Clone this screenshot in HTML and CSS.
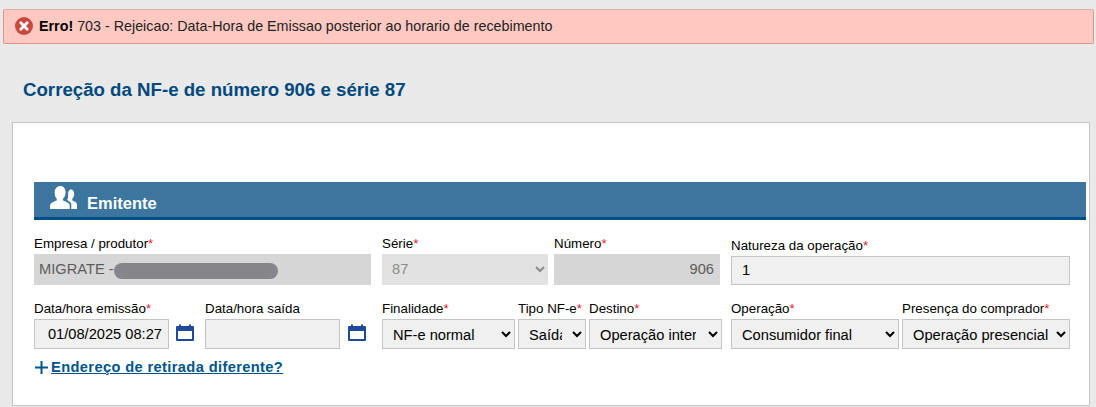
FILE: index.html
```html
<!doctype html>
<html lang="pt-BR">
<head>
	<meta charset="UTF-8">
	<title>Correção da NF-e</title>
	<link rel="stylesheet" href="styles.css">
</head>
<body>
	<div class="alerta">
		<svg class="alerta-icone" width="18" height="18" viewBox="0 0 18 18">
			<circle cx="9" cy="9" r="9" fill="#c9483f"/>
			<path d="M5.8 5.8l6.4 6.4M12.2 5.8l-6.4 6.4" stroke="#fff" stroke-width="2.8" stroke-linecap="round"/>
		</svg>
		<span><b>Erro!</b> 703 - Rejeicao: Data-Hora de Emissao posterior ao horario de recebimento</span>
	</div>

	<h1 class="titulo">Correção da NF-e de número 906 e série 87</h1>

	<div class="cartao">
		<div class="secao">
			<svg class="secao-icone" width="27" height="23" viewBox="1 1 26 21" preserveAspectRatio="none">
				<path fill="#fff" d="M11 1c3 0 5 2.400 5 5.600 0 2.400-1 4.600-2.500 6v1.600c2 .8 6 2 6.500 4.400v3.400H1v-3.400c.4-2.400 4.500-3.600 6.500-4.400v-1.600C6 11.200 5.500 9 5.500 6.600 5.500 3.400 8 1 11 1z"/>
				<path fill="#fff" d="M20.500 4c2.300 0 3.800 1.900 3.800 4.300 0 1.900-.8 3.500-1.900 4.600v1.400c1.600.6 4.200 1.500 4.600 3.400v4.300h-5.500v-4.800c-.4-1.500-2.400-2.700-4-3.500.6-1 1-2 1-3.200V7c.4-1.800 1.800-3 3-3z"/>
			</svg>
			<span>Emitente</span>
		</div>

		<div class="linha linha-1">
			<div class="campo c-empresa">
				<label>Empresa / produtor<i>*</i></label>
				<div class="oculto-box">
					<input class="fixo" type="text" value="MIGRATE -" readonly>
					<span class="oculto"></span>
				</div>
			</div>
			<div class="campo c-serie">
				<label>Série<i>*</i></label>
				<select class="desab" disabled><option>87</option></select>
			</div>
			<div class="campo c-numero">
				<label>Número<i>*</i></label>
				<input class="fixo direita" type="text" value="906" readonly>
			</div>
			<div class="campo c-natureza">
				<label>Natureza da operação<i>*</i></label>
				<input class="natureza" type="text" value="1">
			</div>
		</div>

		<div class="linha linha-2">
			<div class="campo c-data">
				<label>Data/hora emissão<i>*</i></label>
				<input class="data" type="text" value="01/08/2025 08:27">
			</div>
			<svg class="cal" width="18" height="18" viewBox="0 0 18 18">
				<path fill="#1f4a9c" fill-rule="evenodd" d="M1 2h2V.5h2V2h8V.5h2V2h2a1 1 0 0 1 1 1v13a1 1 0 0 1-1 1H1a1 1 0 0 1-1-1V3a1 1 0 0 1 1-1zm1 5v8h14V7z"/>
			</svg>
			<div class="campo c-saida">
				<label>Data/hora saída</label>
				<input class="data" type="text">
			</div>
			<svg class="cal" width="18" height="18" viewBox="0 0 18 18">
				<path fill="#1f4a9c" fill-rule="evenodd" d="M1 2h2V.5h2V2h8V.5h2V2h2a1 1 0 0 1 1 1v13a1 1 0 0 1-1 1H1a1 1 0 0 1-1-1V3a1 1 0 0 1 1-1zm1 5v8h14V7z"/>
			</svg>
			<div class="campo c-finalidade">
				<label>Finalidade<i>*</i></label>
				<select><option>NF-e normal</option></select>
			</div>
			<div class="campo c-tipo">
				<label>Tipo NF-e<i>*</i></label>
				<select><option>Saída</option></select>
			</div>
			<div class="campo c-destino">
				<label>Destino<i>*</i></label>
				<select><option>Operação interna</option></select>
			</div>
			<div class="campo c-operacao">
				<label>Operação<i>*</i></label>
				<select><option>Consumidor final</option></select>
			</div>
			<div class="campo c-presenca">
				<label>Presença do comprador<i>*</i></label>
				<select><option>Operação presencial</option></select>
			</div>
		</div>

		<div class="retirada">
			<svg width="13" height="13" viewBox="0 0 13 13">
				<path d="M6.500 0v13M0 6.500h13" stroke="#00558c" stroke-width="2"/>
			</svg>
			<a href="#">Endereço de retirada diferente?</a>
		</div>
	</div>
</body>
</html>
```

FILE: styles.css
```css
*{
	box-sizing: border-box;
}
html,body{
	height: 100%;
	overflow: hidden;
}
body{
	margin: 0;
	padding: 9px 2px 0 3px;
	background: #e9e9e9;
	font-family: "Liberation Sans", Arial, sans-serif;
	color: #000;
}
.alerta{
	height: 35px;
	display: flex;
	align-items: center;
	gap: 6px;
	padding: 0 0 2px 11px;
	background: #ffc9c2;
	border: 1px solid #e2968a;
	border-top-color: #d8b0a8;
	border-radius: 2px;
	font-size: 14.3px;
	color: #222;
}
.alerta b{
	color: #000;
}
.alerta-icone{
	margin-top: 1px;
}
.titulo{
	margin: 34px 0 0 20px;
	height: 24px;
	font-size: 18.67px;
	line-height: 24px;
	font-weight: bold;
	color: #00497e;
}
.cartao{
	margin: 20px 4px 0 9px;
	height: 284px;
	padding: 59px 3px 0 21px;
	background: #fff;
	border: 1px solid #c4c4c4;
}
.secao{
	height: 38px;
	display: flex;
	align-items: center;
	gap: 10px;
	padding-left: 16px;
	background: #3c769f;
	border-bottom: 3px solid #004f84;
	color: #fff;
	font-size: 16.5px;
	font-weight: bold;
}
.secao span{
	margin-top: 7px;
}
.secao-icone{
	margin-top: -4px;
}
.linha{
	display: flex;
	align-items: flex-end;
}
.linha-1{
	margin-top: 17px;
}
.linha-2{
	margin-top: 17px;
}
.campo{
	flex: none;
	display: flex;
	flex-direction: column;
}
.campo label{
	height: 17px;
	font-size: 13.33px;
	line-height: 13px;
	white-space: nowrap;
}
.campo i{
	color: #e8202a;
	font-style: normal;
}
input,select{
	width: 100%;
	margin: 0;
	height: 30px;
	font-family: "Liberation Sans", Arial, sans-serif;
	font-size: 14.67px;
	color: #000;
	border: 1px solid #c4c4c4;
	border-radius: 0;
	background-color: #f0f0f0;
	outline: none;
}
input{
	padding: 0 6px;
}
select{
	padding: 2px 4px 0 6px;
}
.c-tipo select{
	padding-right: 7px;
}
.c-destino select{
	padding-right: 9px;
}
.fixo{
	height: 31px;
	border: 0;
	padding: 0 6px 2px 5px;
	background: #d6d6d6;
	color: #5c5c5c;
}
.direita{
	text-align: right;
}
select.desab{
	height: 31px;
	border: 0;
	padding: 0 4px 2px 6px;
	background-color: #e2e2e2;
	color: #8b8b8b;
	opacity: 1;
}
.natureza{
	height: 29px;
	padding: 0 10px 2px;
}
.data{
	text-align: right;
}
.oculto-box{
	position: relative;
}
.oculto{
	position: absolute;
	left: 80px;
	top: 9px;
	width: 164px;
	height: 16px;
	border-radius: 8px;
	background: #85858a;
}
.c-empresa{ width: 337px; }
.c-serie{ width: 166px; margin-left: 11px; }
.c-numero{ width: 166px; margin-left: 6px; }
.c-natureza{ width: 339px; margin-left: 11px; }
.c-data,.c-saida{ width: 135px; }
.cal{
	flex: none;
	margin: 0 11px 7px 7px;
}
.c-saida + .cal{
	margin: 0 16px 7px 8px;
}
.c-finalidade{ width: 133px; }
.c-tipo{ width: 68px; margin-left: 3px; }
.c-destino{ width: 133px; margin-left: 3px; }
.c-operacao{ width: 168px; margin-left: 9px; }
.c-presenca{ width: 168px; margin-left: 3px; }
.retirada{
	display: flex;
	align-items: center;
	gap: 3px;
	margin-top: 10px;
	margin-left: 1px;
	font-size: 14.67px;
	font-weight: bold;
	letter-spacing: .37px;
}
.retirada a{
	color: #00558c;
}
```
